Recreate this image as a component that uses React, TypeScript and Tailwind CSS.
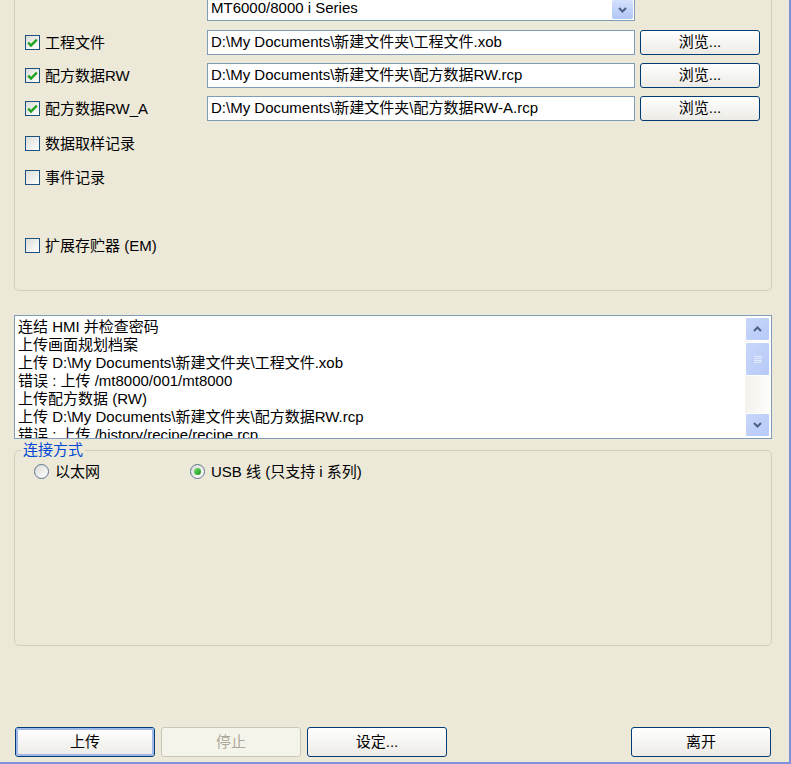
import React from 'react';

const font = 'font-["Liberation_Sans","Noto_Sans_CJK_SC",sans-serif]';

function CheckBox({ checked, label }: { checked?: boolean; label: string }) {
  return (
    <div className="flex items-center gap-[5px]">
      <span className="flex h-[15px] w-[15px] items-center justify-center border border-[#1C5180] bg-gradient-to-br from-[#DCDCD7] to-white">
        {checked && (
          <svg width="11" height="10" viewBox="0 0 11 10">
            <path d="M1.2 4.6 L4 7.6 L9.8 1.6" fill="none" stroke="#21A121" strokeWidth="2.4" />
          </svg>
        )}
      </span>
      <span className="text-[15px] leading-none text-black">{label}</span>
    </div>
  );
}

function Radio({ checked, label }: { checked?: boolean; label: string }) {
  return (
    <div className="flex items-center gap-[6px]">
      <span className="flex h-[15px] w-[15px] items-center justify-center rounded-full border border-[#5D7590] bg-gradient-to-br from-[#DCDCD7] to-white">
        {checked && <span className="h-[7px] w-[7px] rounded-full bg-gradient-to-br from-[#6FE26F] to-[#109410]" />}
      </span>
      <span className="text-[15px] leading-none text-black">{label}</span>
    </div>
  );
}

function Btn({ label, disabled, focused, w = 'w-[140px]' }: { label: string; disabled?: boolean; focused?: boolean; w?: string }) {
  return (
    <div
      className={
        `${w} flex items-center justify-center rounded-[3px] border text-[15px] ` +
        (disabled
          ? 'border-[#C9C7BA] bg-[#F5F4EA] text-[#ACA899]'
          : 'border-[#003C74] bg-gradient-to-b from-white to-[#ECEBE6] text-black')
      }
    >
      <div
        className={
          'flex h-full w-full items-center justify-center rounded-[2px] ' +
          (focused ? 'border-2 border-[#9DB7E8]' : '')
        }
      >
        {label}
      </div>
    </div>
  );
}

function FileRow({ label, path }: { label: string; path: string }) {
  return (
    <div className="flex h-[25px] items-center">
      <div className="w-[192px] pl-[10px]">
        <CheckBox checked label={label} />
      </div>
      <div className="flex h-[25px] w-[428px] items-center border border-[#7F9DB9] bg-white pl-[3px] text-[15px]">{path}</div>
      <div className="ml-[5px] flex h-[25px] w-[120px]">
        <Btn label="浏览..." w="w-[120px]" />
      </div>
    </div>
  );
}

const logLines = [
  '连结 HMI 并检查密码',
  '上传画面规划档案',
  '上传 D:\\My Documents\\新建文件夹\\工程文件.xob',
  '错误 : 上传 /mt8000/001/mt8000',
  '上传配方数据 (RW)',
  '上传 D:\\My Documents\\新建文件夹\\配方数据RW.rcp',
  '错误 : 上传 /history/recipe/recipe.rcp',
];

export default function App() {
  return (
    <div className={`${font} flex h-[764px] w-[791px] flex-col overflow-hidden border-r-2 border-b-2 border-[#7D92DB] bg-[#ECE9D8] text-black`}>
      {/* top group box, its top edge is off screen */}
      <div className="ml-[14px] flex h-[291px] w-[758px] flex-col rounded-b-[5px] border-x border-b border-[#D0D0BF]">
        <div className="flex h-[21px]">
          <div className="w-[192px]" />
          <div className="flex w-[428px] items-end justify-between border-x border-b border-[#7F9DB9] bg-white pl-[3px] text-[15px]">
            <span className="self-start leading-[16px]">MT6000/8000 i Series</span>
            <div className="mr-[1px] mb-[1px] flex h-[19px] w-[21px] items-center justify-center rounded-[2px] bg-gradient-to-b from-[#D5E1FD] to-[#B0C6F5]">
              <svg width="9" height="6" viewBox="0 0 9 6">
                <path d="M1 1 L4.5 4.5 L8 1" fill="none" stroke="#4D6185" strokeWidth="2" />
              </svg>
            </div>
          </div>
        </div>
        <div className="mt-[9px] flex flex-col gap-[8px]">
          <FileRow label="工程文件" path="D:\My Documents\新建文件夹\工程文件.xob" />
          <FileRow label="配方数据RW" path="D:\My Documents\新建文件夹\配方数据RW.rcp" />
          <FileRow label="配方数据RW_A" path="D:\My Documents\新建文件夹\配方数据RW-A.rcp" />
        </div>
        <div className="mt-[10px] flex flex-col pl-[10px]">
          <div className="flex h-[25px] items-center"><CheckBox label="数据取样记录" /></div>
          <div className="mt-[9px] flex h-[25px] items-center"><CheckBox label="事件记录" /></div>
          <div className="mt-[43px] flex h-[25px] items-center"><CheckBox label="扩展存贮器 (EM)" /></div>
        </div>
      </div>

      {/* log box */}
      <div className="mt-[24px] ml-[14px] flex h-[124px] w-[758px] border border-[#7F9DB9] bg-white">
        <div className="flex-1 overflow-hidden pt-[2px] pl-[3px] text-[15px] leading-[18px]">
          {logLines.map((l, i) => (
            <div key={i} className="whitespace-nowrap">{l}</div>
          ))}
        </div>
        <div className="my-[1px] mr-[1px] flex w-[25px] flex-col bg-gradient-to-r from-[#F3F1EC] to-[#FEFEFB]">
          <div className="flex h-[24px] items-center justify-center rounded-[2px] border border-white bg-gradient-to-br from-[#C8D6FB] to-[#B6CAF7]">
            <svg width="9" height="6" viewBox="0 0 9 6">
              <path d="M1 5 L4.5 1.5 L8 5" fill="none" stroke="#4D6185" strokeWidth="2" />
            </svg>
          </div>
          <div className="mt-[1px] flex h-[34px] items-center justify-center rounded-[2px] border border-white bg-gradient-to-br from-[#C8D6FB] to-[#B6CAF7]">
            <svg width="8" height="8" viewBox="0 0 8 8">
              <path d="M0 1.5 H8 M0 3.5 H8 M0 5.5 H8 M0 7.5 H8" stroke="#E3EBFD" strokeWidth="1" />
            </svg>
          </div>
          <div className="flex-1" />
          <div className="flex h-[24px] items-center justify-center rounded-[2px] border border-white bg-gradient-to-br from-[#C8D6FB] to-[#B6CAF7]">
            <svg width="9" height="6" viewBox="0 0 9 6">
              <path d="M1 1 L4.5 4.5 L8 1" fill="none" stroke="#4D6185" strokeWidth="2" />
            </svg>
          </div>
        </div>
      </div>

      {/* connection group box */}
      <div className="relative mt-[11px] ml-[14px] h-[196px] w-[758px] rounded-[5px] border border-[#D0D0BF]">
        <span className="absolute -top-[9px] left-[6px] bg-[#ECE9D8] px-[2px] text-[15px] leading-[16px] text-[#0046D5]">连接方式</span>
        <div className="flex pt-[13px] pl-[19px]">
          <div className="w-[156px]"><Radio label="以太网" /></div>
          <Radio checked label="USB 线 (只支持 i 系列)" />
        </div>
      </div>

      {/* bottom buttons */}
      <div className="mt-[81px] ml-[15px] flex h-[30px] w-[756px]">
        <Btn label="上传" focused />
        <div className="ml-[6px] flex"><Btn label="停止" disabled /></div>
        <div className="ml-[6px] flex"><Btn label="设定..." /></div>
        <div className="flex-1" />
        <Btn label="离开" />
      </div>
    </div>
  );
}
